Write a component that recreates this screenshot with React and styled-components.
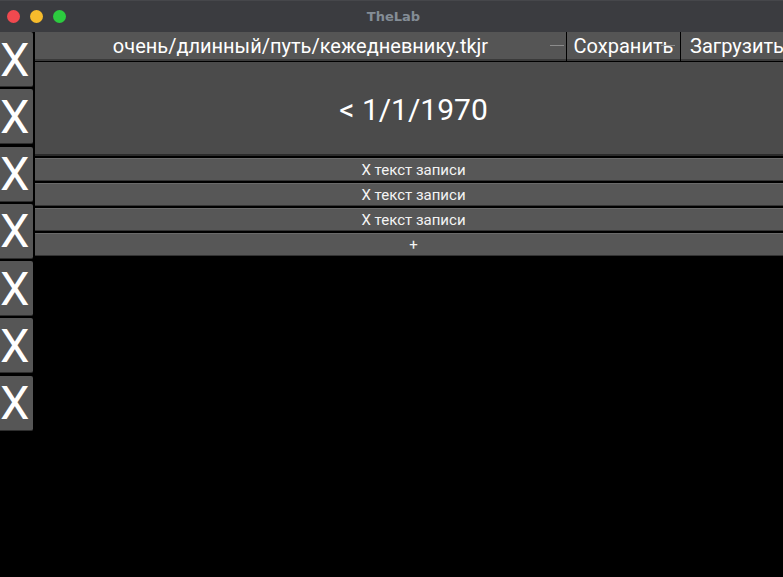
import React from "react"
import styled, { createGlobalStyle } from "styled-components"

const GlobalStyle = createGlobalStyle`
  html, body {
    margin: 0;
    padding: 0;
    background: #000;
    overflow: hidden;
  }
  body {
    width: 783px;
    height: 577px;
    font-family: Roboto, "Noto Sans", "DejaVu Sans", sans-serif;
  }
`

const Window = styled.div`
  width: 783px;
  height: 577px;
  display: flex;
  flex-direction: column;
  background: #000;
  overflow: hidden;
`

const TitleBar = styled.div`
  height: 32px;
  flex: 0 0 32px;
  position: relative;
  display: flex;
  align-items: center;
  justify-content: center;
  background: #3b3c40;
  border-top: 1px solid #46474b;
  box-sizing: border-box;
`

const Lights = styled.div`
  position: absolute;
  left: 7px;
  top: 9px;
  display: flex;
  gap: 10px;
`

const Light = styled.span`
  width: 13px;
  height: 13px;
  border-radius: 50%;
  background: ${({ color }) => color};
`

const Title = styled.span`
  font-family: "DejaVu Sans", sans-serif;
  font-weight: bold;
  font-size: 13px;
  color: #848d96;
  margin-left: 4px;
`

const Body = styled.div`
  flex: 1;
  display: flex;
  gap: 2px;
  align-items: flex-start;
`

const Side = styled.div`
  width: 33px;
  flex: 0 0 33px;
  display: flex;
  flex-direction: column;
  gap: 2.3px;
`

const XButton = styled.div`
  height: 55px;
  background: #565656;
  border-bottom: 1px solid #2e2e2e;
  border-radius: 0 2px 2px 0;
  box-sizing: border-box;
  display: flex;
  align-items: center;
  justify-content: flex-start;
  color: #fff;
  font-size: 47px;
  line-height: 1;
`

/* the main column runs a little past the right edge of the window */
const Main = styled.div`
  flex: 0 0 757px;
  width: 757px;
  display: flex;
  flex-direction: column;
`

const Header = styled.div`
  display: grid;
  grid-template-columns: 531px 113px 1fr;
  gap: 1px;
  height: 29px;
  background: #000;
`

const Field = styled.div`
  position: relative;
  display: flex;
  align-items: center;
  justify-content: center;
  background: #555555;
  border-bottom: 2px solid #3a3a3a;
  color: #fff;
  font-size: 20px;
  white-space: nowrap;
  box-sizing: border-box;
  padding-top: 1px;
  &::after {
    content: "";
    display: ${({ dash }) => (dash ? "block" : "none")};
    position: absolute;
    right: ${({ dash }) => dash}px;
    top: 13px;
    width: 14px;
    height: 1px;
    background: #8c8c8c;
  }
`

const Button = styled(Field)`
  justify-content: ${({ start }) => (start ? "flex-start" : "center")};
  padding-left: ${({ start }) => (start ? "9px" : "0")};
`

const DateBox = styled.div`
  margin-top: 1px;
  height: 94px;
  background: #4b4b4b;
  border-bottom: 2px solid #2a2a2a;
  box-sizing: border-box;
  display: flex;
  align-items: center;
  justify-content: center;
  color: #fff;
  font-size: 30px;
  padding-top: 2px;
`

const Rows = styled.div`
  margin-top: 2px;
  display: flex;
  flex-direction: column;
  gap: 2px;
`

const Row = styled.div`
  height: 23px;
  background: #575757;
  border-top: 1px solid #6a6a6a;
  border-bottom: 1px solid #333;
  box-sizing: border-box;
  display: flex;
  align-items: center;
  justify-content: center;
  color: #f4f4f4;
  font-size: 15px;
`

const entries = ["X текст записи", "X текст записи", "X текст записи", "+"]

export default function App() {
  return (
    <>
      <GlobalStyle />
      <Window>
        <TitleBar>
          <Lights>
            <Light color="#f0494f" />
            <Light color="#f7bc2c" />
            <Light color="#2ccb3f" />
          </Lights>
          <Title>TheLab</Title>
        </TitleBar>
        <Body>
          <Side>
            {Array.from({ length: 7 }).map((_, i) => (
              <XButton key={i}>X</XButton>
            ))}
          </Side>
          <Main>
            <Header>
              <Field dash={2}>очень/длинный/путь/кежедневнику.tkjr</Field>
              <Button dash={5}>Сохранить</Button>
              <Button start>Загрузить</Button>
            </Header>
            <DateBox>&lt; 1/1/1970</DateBox>
            <Rows>
              {entries.map((text, i) => (
                <Row key={i}>{text}</Row>
              ))}
            </Rows>
          </Main>
        </Body>
      </Window>
    </>
  )
}
